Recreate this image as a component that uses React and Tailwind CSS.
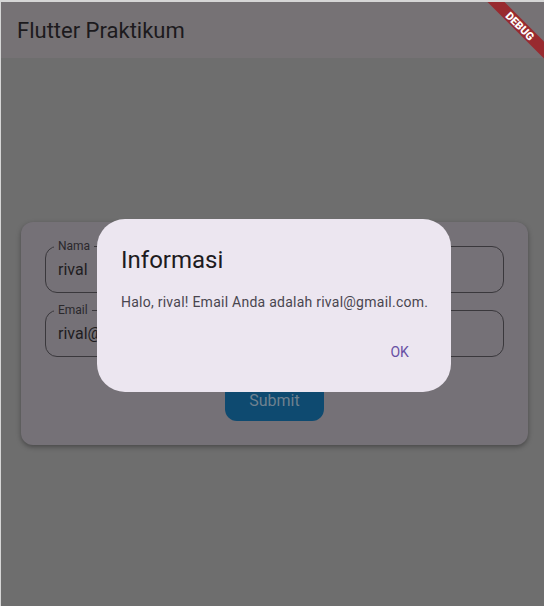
const Field = ({ label, value }) => (
  <div className="relative h-[47px] rounded-xl border border-[#3a383c] px-3 flex items-center">
    <span className="absolute -top-[9px] left-[8px] px-[4px] bg-[#757177] text-[12px] leading-4 text-[#2a282c]">
      {label}
    </span>
    <span className="text-[16px] text-[#1f1d21] pt-[2px]">{value}</span>
  </div>
);

export default function App() {
  return (
    <div className="w-[544px] h-[606px] bg-[#d6d6d6] pt-[2px] pl-px font-['Roboto',sans-serif] overflow-hidden">
      <div className="relative h-full w-full bg-[#6e6e6e] flex flex-col overflow-hidden">
        <header className="h-[56px] shrink-0 bg-[#767275] flex items-center pl-4">
          <h1 className="text-[22px] text-[#1c1a1d]">Flutter Praktikum</h1>
        </header>

        <main className="flex-1 flex items-center justify-center pl-5 pr-4 pt-[2px]">
          <div className="w-full rounded-xl bg-[#757177] p-6 shadow-[0_2px_5px_rgba(0,0,0,0.35)]">
            <div className="flex flex-col gap-[17px]">
              <Field label="Nama" value="rival" />
              <Field label="Email" value="rival@gmail.com" />
            </div>
            <div className="flex justify-center mt-6">
              <button className="h-10 w-[99px] rounded-xl bg-[#0e4a70] text-[16px] text-[#6e818f]">
                Submit
              </button>
            </div>
          </div>
        </main>

        {/* dialog */}
        <div className="absolute inset-0 flex items-center justify-center pt-[3px] pl-[3px]">
          <div className="w-[354px] rounded-[28px] bg-[#ece6f0] pt-[25px] px-6 pb-5">
            <h2 className="text-[24px] leading-8 text-[#1d1b20]">Informasi</h2>
            <p className="mt-4 text-[14px] leading-5 tracking-[0.25px] whitespace-nowrap text-[#49454f]">
              Halo, rival! Email Anda adalah rival@gmail.com.
            </p>
            <div className="mt-[20px] flex justify-end">
              <button className="h-10 pl-3 pr-[18px] text-[14px] tracking-[0.1px] text-[#6750a4]">OK</button>
            </div>
          </div>
        </div>

        {/* debug banner */}
        <div className="absolute left-[479px] top-[18px] w-[80px] h-[12px] rotate-45 bg-[#982a2f] flex items-center justify-center">
          <span className="text-[11px] leading-none font-black text-white">DEBUG</span>
        </div>
      </div>
    </div>
  );
}
